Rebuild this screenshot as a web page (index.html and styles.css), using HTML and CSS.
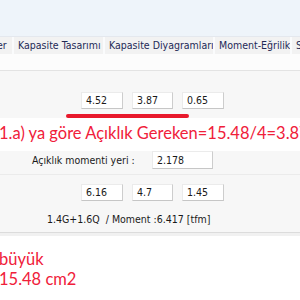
FILE: index.html
```html
<!DOCTYPE html>
<html>
<head>
<meta charset="utf-8">
<link rel="stylesheet" href="styles.css">
</head>
<body>
<div class="page">
  <div class="top"></div>
  <div class="tabs">
    <div class="tab t1">er</div>
    <div class="tab t2">Kapasite Tasarımı</div>
    <div class="tab t3">Kapasite Diyagramları</div>
    <div class="tab t4">Moment-Eğrilik</div>
    <div class="tab t5">S</div>
  </div>
  <div class="sub"></div>
  <div class="panel panel1">
    <div class="row boxes">
      <div class="box w42">4.52</div>
      <div class="box w41">3.87</div>
      <div class="box w42">0.65</div>
    </div>
    <div class="redline"></div>
  </div>
  <div class="note note1">1.a) ya göre Açıklık Gereken=15.48/4=3.87</div>
  <div class="panel panel2">
    <div class="row labelrow">
      <span class="label">Açıklık momenti yeri :</span>
      <div class="box wide">2.178</div>
    </div>
    <div class="divider"></div>
    <div class="row boxes">
      <div class="box w42">6.16</div>
      <div class="box w41">4.7</div>
      <div class="box w42">1.45</div>
    </div>
    <div class="row combo">1.4G+1.6Q&nbsp;&nbsp;/ Moment :6.417 [tfm]</div>
  </div>
  <div class="bottom">
    <div class="note note2">büyük</div>
    <div class="note note2">15.48 cm2</div>
  </div>
</div>
</body>
</html>
```

FILE: styles.css
```css
html, body {
  margin: 0;
  padding: 0;
  background: #ffffff;
}
.page {
  width: 300px;
  height: 300px;
  overflow: hidden;
  font-family: "DejaVu Sans Condensed", "DejaVu Sans", sans-serif;
}
.top {
  height: 36px;
  background: #eef4fa;
}
.tabs {
  display: flex;
  height: 18px;
  background: #fafbfc;
  border-top: 1px solid #e4e8ee;
  box-sizing: border-box;
  white-space: nowrap;
  overflow: hidden;
}
.tab {
  flex: none;
  box-sizing: border-box;
  background: #f2f2f2;
  margin-right: 2px;
  padding-left: 4px;
  font-size: 10.5px;
  line-height: 17px;
  color: #1e2a57;
  overflow: hidden;
}
.t1 { width: 12px; padding-left: 0; text-indent: -3px; }
.t2 { width: 89px; }
.t3 { width: 108px; }
.t4 { width: 75px; }
.t5 { width: 20px; }
.sub {
  height: 16px;
  background: #fcfcfc;
  border-bottom: 1px solid #e3e3e3;
}
.panel {
  background: #f7f7f7;
}
.panel1 {
  padding-top: 21px;
  height: 47px;
  box-sizing: border-box;
}
.row {
  display: flex;
  align-items: center;
}
.boxes {
  padding-left: 81px;
  gap: 9px;
}
.box {
  flex: none;
  height: 17px;
  box-sizing: border-box;
  background: #ffffff;
  border: 1px solid #ebebeb;
  border-right-color: #cdcdcd;
  border-bottom-color: #c6c6c6;
  font-size: 10.5px;
  line-height: 15px;
  padding-left: 4px;
  color: #1a1a1a;
}
.w42 { width: 42px; }
.w41 { width: 41px; }
.wide { width: 61px; height: 18px; line-height: 16px; }
.redline {
  margin: 5px 0 0 66px;
  width: 123px;
  height: 4px;
  border-radius: 2px;
  background: #e8192c;
}
.note {
  font-family: "Lato", "Open Sans", sans-serif;
  color: #f0203a;
  font-size: 16.5px;
  white-space: nowrap;
}
.note1 {
  height: 33px;
  line-height: 30px;
  margin-left: -1px;
  background: #ffffff;
}
.panel2 {
  height: 82px;
  box-sizing: border-box;
  border-bottom: 1px solid #dcdcdc;
}
.labelrow {
  padding-left: 32px;
  height: 18px;
}
.label {
  flex: none;
  width: 120px;
  font-size: 10.5px;
  color: #1a1a1a;
}
.divider {
  margin-top: 5px;
  height: 1px;
  background: #ebebeb;
}
.panel2 .boxes {
  margin-top: 9px;
}
.combo {
  padding-left: 47px;
  margin-top: 12px;
  font-size: 10.5px;
  color: #1a1a1a;
}
.bottom {
  border-top: 3px solid #f1f1f1;
  padding-top: 13px;
}
.note2 {
  line-height: 20px;
  margin-left: -1px;
}
```
